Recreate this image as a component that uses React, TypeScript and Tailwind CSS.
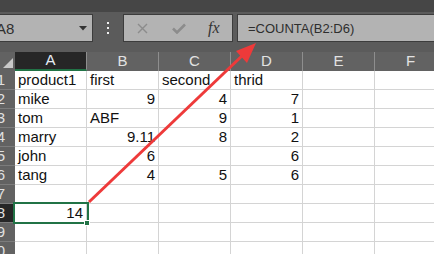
import React from "react";

type Cell = { v: string; r?: boolean };

const data: Cell[][] = [
  [{ v: "product1" }, { v: "first" }, { v: "second" }, { v: "thrid" }],
  [{ v: "mike" }, { v: "9", r: true }, { v: "4", r: true }, { v: "7", r: true }],
  [{ v: "tom" }, { v: "ABF" }, { v: "9", r: true }, { v: "1", r: true }],
  [{ v: "marry" }, { v: "9.11", r: true }, { v: "8", r: true }, { v: "2", r: true }],
  [{ v: "john" }, { v: "6", r: true }, { v: "" }, { v: "6", r: true }],
  [{ v: "tang" }, { v: "4", r: true }, { v: "5", r: true }, { v: "6", r: true }],
  [],
  [{ v: "14", r: true }],
  [],
  [],
];

const cols = ["A", "B", "C", "D", "E", "F"];

export default function App() {
  return (
    <div
      className="relative w-[434px] h-[254px] overflow-hidden bg-[#5b5b5b]"
      style={{ fontFamily: '"Liberation Sans", Arial, sans-serif' }}
    >
      {/* top strip */}
      <div className="h-[12px] bg-[#464646]" />
      {/* formula bar */}
      <div className="flex h-[40px] pt-[2px] items-start">
        <div className="ml-[-8px] w-[101px] h-[28px] shrink-0 border border-[#3c3c3c] bg-[#b3b3b3] flex items-center justify-between pl-[3px] pr-[5px]">
          <span className="text-[15px] text-[#303030] leading-none">A8</span>
          <svg width="8" height="5" viewBox="0 0 8 5">
            <polygon points="0,0 8,0 4,4.5" fill="#333" />
          </svg>
        </div>
        <div className="w-[30px] h-[28px] shrink-0 flex flex-col items-center justify-center gap-[3px]">
          <div className="w-[2px] h-[2px] bg-[#f0f0f0]" />
          <div className="w-[2px] h-[2px] bg-[#f0f0f0]" />
          <div className="w-[2px] h-[2px] bg-[#f0f0f0]" />
        </div>
        <div className="w-[110px] h-[28px] shrink-0 border border-[#3c3c3c] bg-[#b3b3b3] flex items-center pl-[13px]">
          <svg width="11" height="11" viewBox="0 0 11 11">
            <path d="M1 1 L10 10 M10 1 L1 10" stroke="#8c8c8c" strokeWidth="1.4" fill="none" />
          </svg>
          <svg width="14" height="11" viewBox="0 0 14 11" className="ml-[24px]">
            <path d="M1 5.5 L5 9.5 L13 1.5" stroke="#8c8c8c" strokeWidth="2.6" fill="none" />
          </svg>
          <span
            className="ml-[22px] text-[16px] italic text-[#333] leading-none"
            style={{ fontFamily: '"Liberation Serif", "Times New Roman", serif' }}
          >
            fx
          </span>
        </div>
        <div className="ml-[4px] w-[220px] h-[28px] shrink-0 border border-[#3c3c3c] bg-[#b3b3b3] flex items-center pl-[10px]">
          <span className="text-[13px] text-[#2e2e2e] leading-none">=COUNTA(B2:D6)</span>
        </div>
      </div>

      {/* grid */}
      <div className="flex flex-col">
        {/* header row */}
        <div className="flex h-[19px]">
          <div className="w-[15px] shrink-0 bg-[#626262] relative flex items-end justify-end pr-[2px] pb-[3px]">
            <svg width="10" height="10" viewBox="0 0 10 10">
              <polygon points="10,0 10,10 0,10" fill="#c9c9c9" />
            </svg>
          </div>
          {cols.map((c, i) => (
            <div
              key={c}
              className={
                i === 0
                  ? "w-[72px] shrink-0 bg-[#262626] border-b-2 border-[#217346] border-r border-r-[#8e8e8e] flex items-center justify-center text-[15px] text-[#e4ecf4]"
                  : "w-[72px] shrink-0 bg-[#626262] border-r border-[#8e8e8e] flex items-center justify-center text-[15px] text-[#e2e2e2]"
              }
            >
              {c}
            </div>
          ))}
        </div>
        {data.map((row, ri) => (
          <div key={ri} className="flex h-[19px]">
            <div
              className={
                ri === 7
                  ? "w-[15px] shrink-0 bg-[#262626] border-b border-[#7c7c7c] flex items-center justify-end pr-[10px] text-[15px] text-[#e0e0e0] overflow-hidden"
                  : "w-[15px] shrink-0 bg-[#626262] border-b border-[#7c7c7c] flex items-center justify-end pr-[10px] text-[15px] text-[#e0e0e0] overflow-hidden"
              }
            >
              {ri + 1}
            </div>
            {cols.map((c, ci) => {
              const cell = row[ci];
              return (
                <div
                  key={c}
                  className={
                    "relative w-[72px] shrink-0 bg-white border-r border-b border-[#d4d4d4] flex items-center px-[3px] text-[15px] text-[#111] whitespace-nowrap " +
                    (cell?.r ? "justify-end" : "justify-start")
                  }
                >
                  {cell?.v ?? ""}
                  {ri === 7 && ci === 0 && (
                    <div className="absolute left-[-2px] top-[-2px] w-[76px] h-[22px] border-2 border-[#217346] z-10">
                      <div className="absolute left-[69px] top-[16px] w-[6px] h-[6px] bg-[#217346] border border-white" />
                    </div>
                  )}
                </div>
              );
            })}
          </div>
        ))}
      </div>

      {/* red arrow */}
      <svg
        className="absolute left-0 top-0 pointer-events-none z-20"
        width="434"
        height="254"
        viewBox="0 0 434 254"
      >
        <line x1="89" y1="202" x2="244" y2="54" stroke="#ee3a3a" strokeWidth="3" />
        <polygon points="256,43 236,51 247,63" fill="#ee3a3a" />
      </svg>
    </div>
  );
}
